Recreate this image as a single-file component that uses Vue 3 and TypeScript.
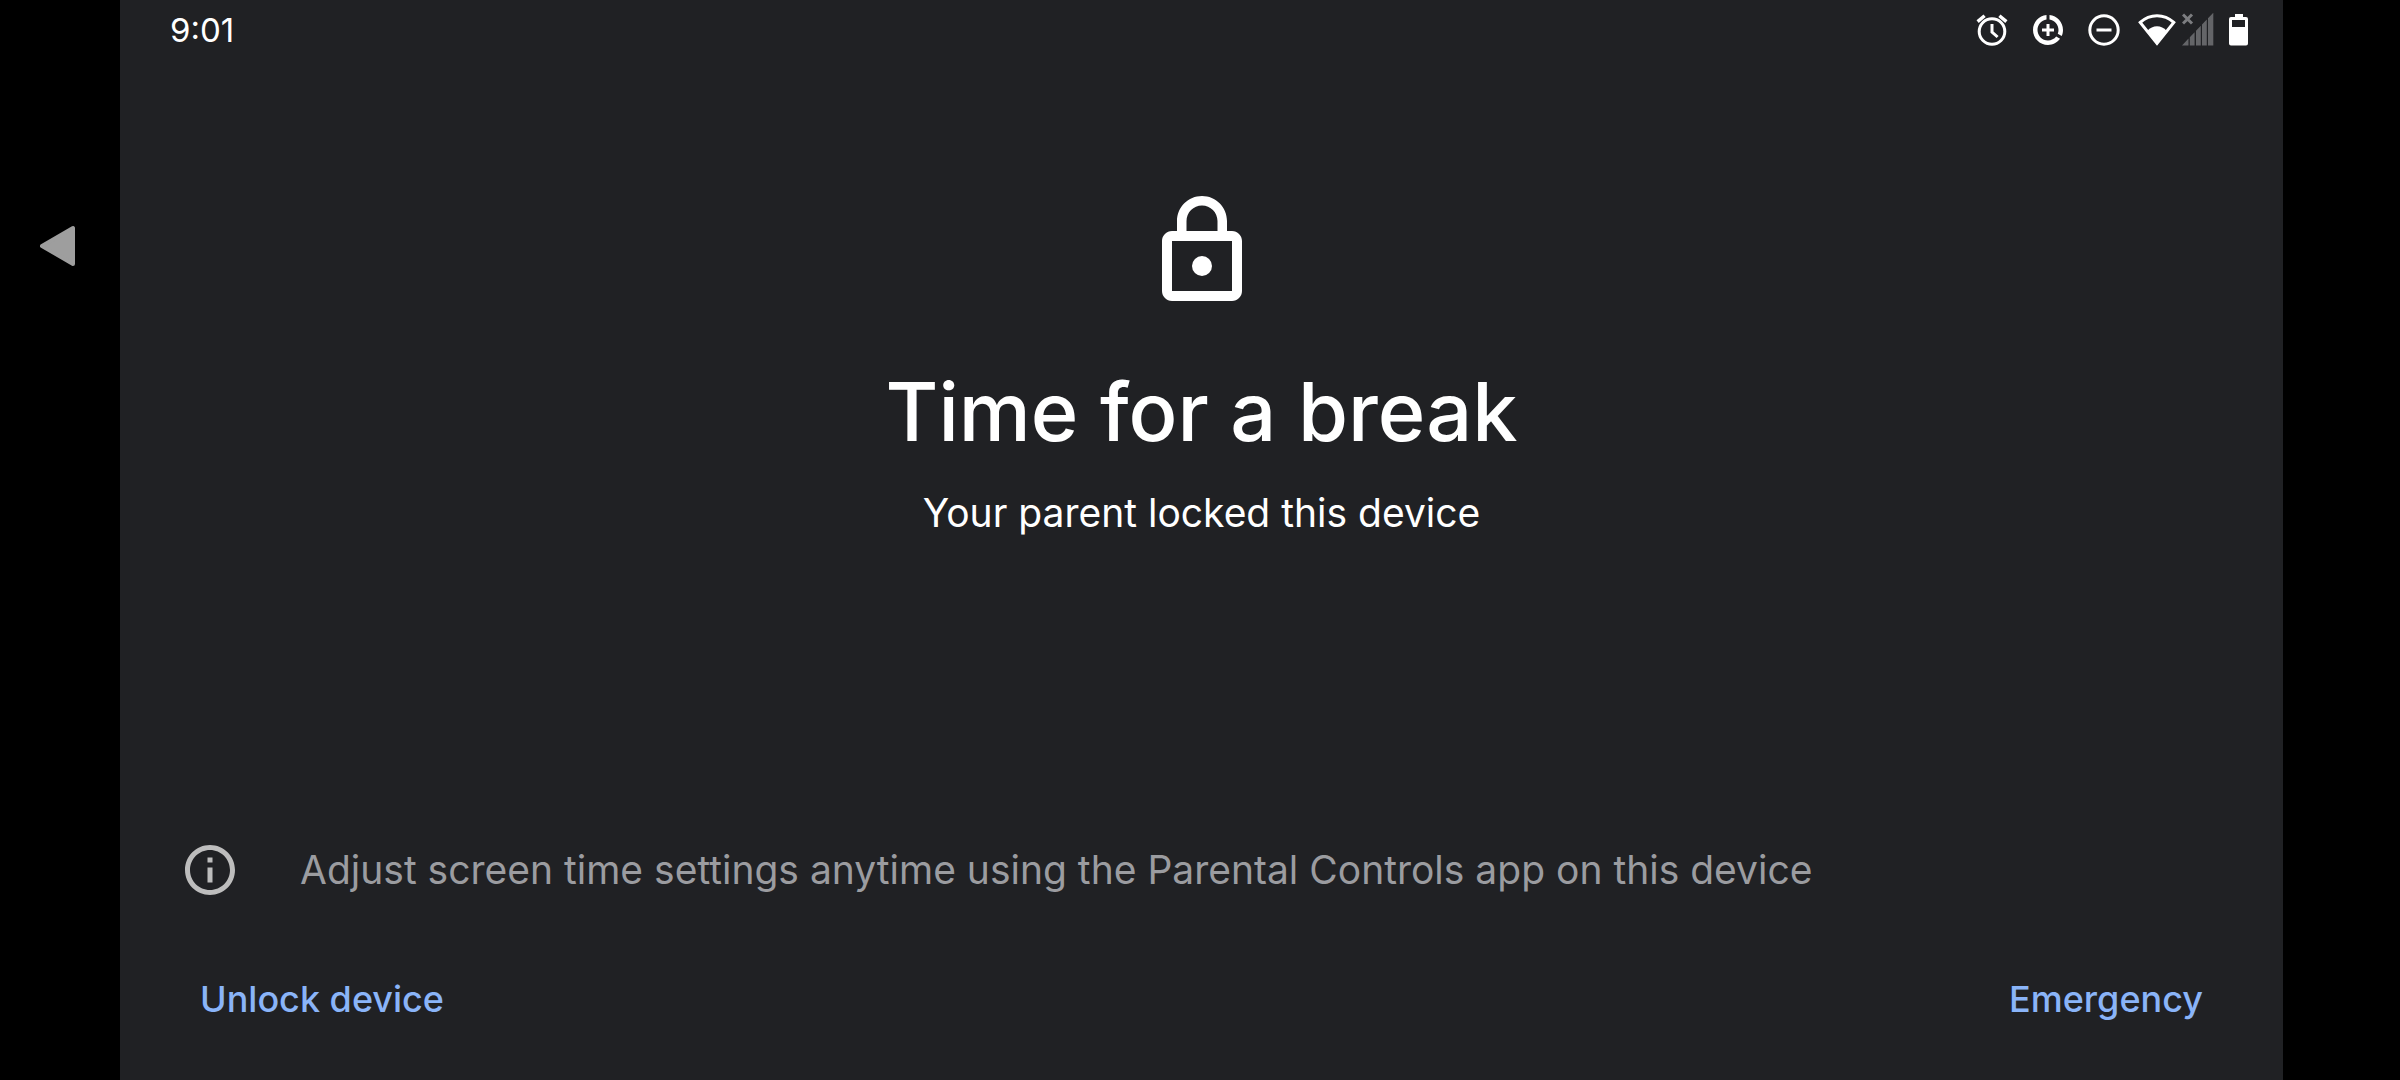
<script setup lang="ts">
import { ref } from 'vue'

const time = ref('9:01')
const title = 'Time for a break'
const reason = 'Your parent locked this device'
const hint = 'Adjust screen time settings anytime using the Parental Controls app on this device'
</script>

<template>
  <div class="device">
    <nav class="edge edge-left" aria-label="System navigation">
      <button class="back" type="button" aria-label="Back">
        <svg width="36" height="42" viewBox="0 0 36 42" aria-hidden="true">
          <path d="M2 21 33 3v36z" fill="#9e9e9e" stroke="#9e9e9e" stroke-width="4" stroke-linejoin="round" />
        </svg>
      </button>
    </nav>

    <div class="screen">
      <header class="status">
        <time class="clock">{{ time }}</time>
        <div class="icons">
          <div class="group">
            <svg width="36" height="36" viewBox="0 0 36 36" fill="none" stroke="#fff" aria-label="Alarm" role="img">
              <circle cx="18" cy="19.5" r="12.8" stroke-width="3" />
              <path d="M18 12v8l5.6 5" stroke-width="3" />
              <path d="M3.6 9.6 10.6 3.7M32.4 9.6l-7-5.9" stroke-width="3.4" />
            </svg>
            <svg width="36" height="36" viewBox="0 0 24 24" fill="#fff" aria-label="Data saver" role="img">
              <path d="M11 8v3H8v2h3v3h2v-3h3v-2h-3V8h-2zm2-5.95v3.03c3.39.49 6 3.39 6 6.92 0 .9-.18 1.75-.48 2.54l2.6 1.53c.56-1.24.88-2.62.88-4.07 0-5.18-3.95-9.45-9-9.95zM12 19c-3.87 0-7-3.13-7-7 0-3.53 2.61-6.43 6-6.92V2.05c-5.06.5-9 4.76-9 9.95 0 5.52 4.47 10 9.99 10 3.31 0 6.24-1.61 8.06-4.09l-2.6-1.53C16.17 17.98 14.21 19 12 19z" />
            </svg>
            <svg width="36" height="36" viewBox="0 0 36 36" fill="none" stroke="#fff" stroke-width="3" aria-label="Do not disturb" role="img">
              <circle cx="18" cy="18" r="14.2" />
              <path d="M10.5 18h15" />
            </svg>
          </div>
          <svg width="38" height="36" viewBox="0 0 38 36" aria-label="Wi-Fi" role="img">
            <path d="M2.2 10.4C12 1.4 26 1.4 35.8 10.4L19 31.4z" fill="none" stroke="#fff" stroke-width="3" />
            <path d="M9.4 18.8c5-6 14.2-6 19.2 0L19 33z" fill="#fff" />
          </svg>
          <svg class="signal" width="32" height="36" viewBox="0 0 32 36" fill="#646568" aria-label="No mobile signal" role="img">
            <path d="M0 33.5 6.5 26.5v7zM7.8 25.2l4.8-5v13.3H7.8zM14 18.7l4.8-5v19.8H14zM20 12.5l4.8-5v26H20zM26 6.2l5.3-5.5v32.8H26z" />
            <path d="M1 2.5 10 11.5M10 2.5 1 11.5" stroke="#7c7d80" stroke-width="3" />
          </svg>
          <svg class="battery" width="20" height="36" viewBox="0 0 20 36" aria-label="Battery" role="img">
            <path fill-rule="evenodd" fill="#fff" d="M6 2h8v3h3q2 0 2 2v24.500q0 2-2 2H2q-2 0-2-2V7q0-2 2-2h4zM3 8v7h13V8z" />
          </svg>
        </div>
      </header>

      <main class="message">
        <svg class="lock" width="120" height="120" viewBox="0 0 24 24" fill="#fff" aria-hidden="true">
          <path d="M18 8h-1V6c0-2.76-2.24-5-5-5S7 3.24 7 6v2H6c-1.1 0-2 .9-2 2v10c0 1.1.9 2 2 2h12c1.1 0 2-.9 2-2V10c0-1.1-.9-2-2-2zM8.900 6c0-1.71 1.39-3.1 3.1-3.1s3.1 1.39 3.1 3.1v2H8.900V6zM18 20H6V10h12v10z" />
          <circle cx="12" cy="15" r="2" />
        </svg>
        <h1>{{ title }}</h1>
        <p>{{ reason }}</p>
      </main>

      <footer class="bottom">
        <div class="hint">
          <svg width="60" height="60" viewBox="0 0 24 24" fill="#bdbdbd" aria-hidden="true">
            <path d="M11 7h2v2h-2zM11 11h2v6h-2zM12 2C6.48 2 2 6.48 2 12s4.48 10 10 10 10-4.48 10-10S17.52 2 12 2zm0 18c-4.41 0-8-3.59-8-8s3.59-8 8-8 8 3.59 8 8-3.59 8-8 8z" />
          </svg>
          <p>{{ hint }}</p>
        </div>
        <div class="actions">
          <button type="button">Unlock device</button>
          <button type="button">Emergency</button>
        </div>
      </footer>
    </div>

    <div class="edge edge-right"></div>
  </div>
</template>

<style>
body {
  margin: 0;
  background: #000;
}
</style>

<style scoped>
.device {
  display: flex;
  min-height: 100vh;
  font-family: Inter, "Open Sans", sans-serif;
  color: #fff;
  background: #000;
}

.edge {
  flex: none;
  box-sizing: border-box;
}

.edge-left {
  width: 120px;
  padding: 225px 0 0 40px;
}

.edge-right {
  width: 117px;
}

button {
  border: 0;
  background: none;
  font-family: inherit;
  cursor: pointer;
}

svg {
  display: block;
  flex: none;
}

.back {
  display: block;
  padding: 0;
}

.screen {
  flex: 1;
  min-width: 0;
  display: flex;
  flex-direction: column;
  background: #202124;
}

.status {
  display: flex;
  align-items: center;
  justify-content: space-between;
  height: 60px;
  padding: 0 34px 0 50px;
}

.clock {
  font-size: 33px;
  line-height: 40px;
}

.icons {
  display: flex;
  align-items: center;
}

.group {
  display: flex;
  gap: 20px;
  margin-right: 16px;
}

.signal {
  margin-left: 6px;
}

.battery {
  margin-left: 15px;
}

.message {
  display: flex;
  flex-direction: column;
  align-items: center;
  padding-top: 131px;
  text-align: center;
}

h1 {
  margin: 51px 0 27px;
  font-size: 81px;
  font-weight: 500;
  line-height: 100px;
}

p {
  margin: 0;
  font-size: 39px;
  line-height: 48px;
}

.bottom {
  margin-top: auto;
  padding: 0 60px 45px;
}

.hint {
  display: flex;
  align-items: center;
  gap: 60px;
  margin-bottom: 63px;
  color: #9b9ca0;
}

.actions {
  display: flex;
  justify-content: space-between;
}

.actions button {
  height: 72px;
  padding: 0 20px;
  font-size: 36px;
  font-weight: 500;
  line-height: 40px;
  color: #8ab4f8;
}
</style>
